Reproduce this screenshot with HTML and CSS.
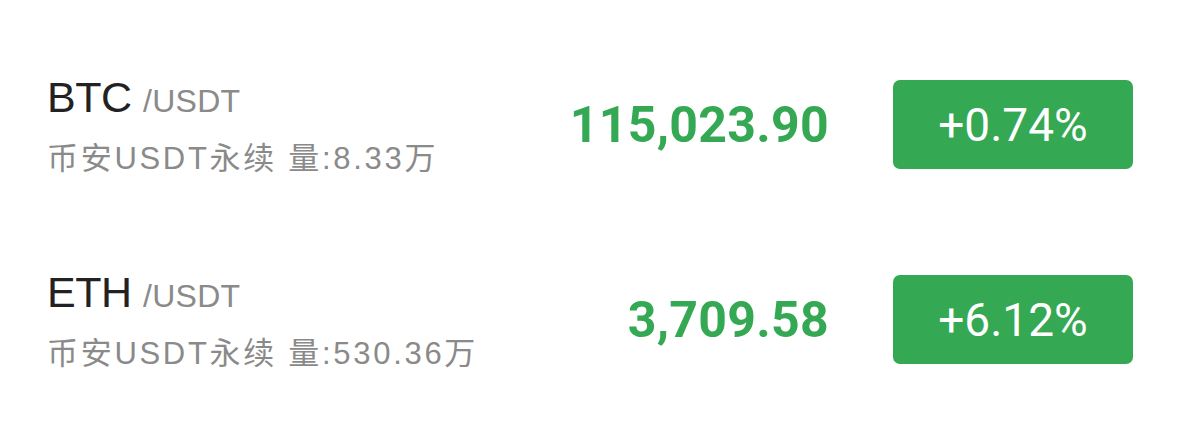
FILE: index.html
```html
<!DOCTYPE html>
<html lang="zh-CN">
<head>
    <meta charset="UTF-8">
    <meta name="viewport" content="width=device-width, initial-scale=1.0">
    <title>Market List</title>
    <link rel="stylesheet" href="styles.css">
</head>
<body>
    <div class="market-list">
        <div class="market-row">
            <div class="pair-info">
                <div class="pair-name">BTC <span class="pair-quote">/USDT</span></div>
                <div class="pair-meta">币安USDT永续 量:8.33万</div>
            </div>
            <div class="pair-price">115,023.90</div>
            <div class="pair-change">+0.74%</div>
        </div>
        <div class="market-row">
            <div class="pair-info">
                <div class="pair-name">ETH <span class="pair-quote">/USDT</span></div>
                <div class="pair-meta">币安USDT永续 量:530.36万</div>
            </div>
            <div class="pair-price">3,709.58</div>
            <div class="pair-change">+6.12%</div>
        </div>
    </div>
</body>
</html>
```

FILE: styles.css
```css
body {
    margin: 0;
    background: #fff;
    font-family: "Liberation Sans", "Noto Sans CJK SC", sans-serif;
}

.market-list {
    padding: 27px 46px 0 47px;
}

.market-row {
    display: flex;
    align-items: center;
    height: 195px;
}

.pair-info {
    flex: 1;
    display: flex;
    flex-direction: column;
    gap: 16px;
}

.pair-name {
    font-size: 43px;
    line-height: 48px;
    color: #222;
    letter-spacing: -0.5px;
}

.pair-quote {
    font-size: 32px;
    color: #8a8a8a;
    letter-spacing: 0.3px;
}

.pair-meta {
    font-size: 31px;
    line-height: 36px;
    color: #8a8a8a;
    letter-spacing: 2.7px;
}

.pair-price {
    font-family: Roboto, sans-serif;
    font-weight: 700;
    font-size: 50px;
    letter-spacing: 0.3px;
    color: #34a853;
    margin-right: 64px;
}

.pair-change {
    width: 240px;
    height: 89px;
    border-radius: 7px;
    background: #34a853;
    color: #fff;
    font-family: Roboto, sans-serif;
    font-weight: 400;
    font-size: 46px;
    display: flex;
    align-items: center;
    justify-content: center;
}
```
